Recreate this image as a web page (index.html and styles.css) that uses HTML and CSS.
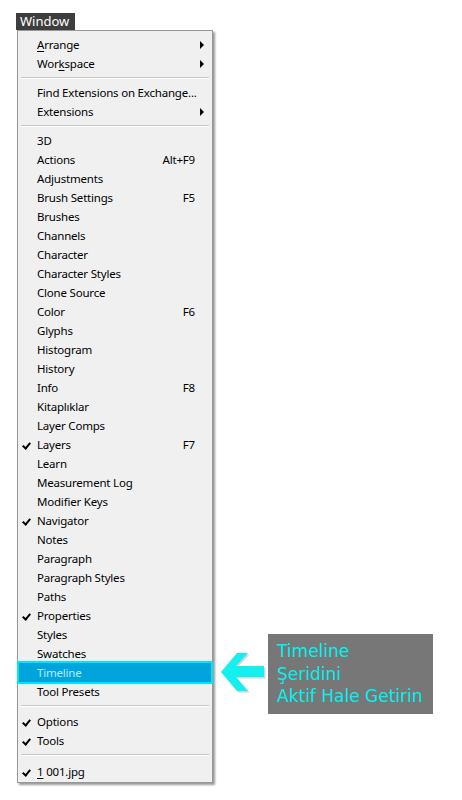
FILE: index.html
```html
<!DOCTYPE html>
<html lang="tr">
<head>
  <meta charset="UTF-8">
  <title>Window</title>
  <link rel="stylesheet" href="styles.css">
</head>
<body>
<div class="page">
  <div class="tab">Window</div>

  <ul class="menu">
    <li class="item sub"><span class="label"><u>A</u>rrange</span></li>
    <li class="item sub"><span class="label">Wor<u>k</u>space</span></li>
    <li class="sep"></li>
    <li class="item"><span class="label">Find Extensions on Exchange...</span></li>
    <li class="item sub"><span class="label">Extensions</span></li>
    <li class="sep"></li>
    <li class="item"><span class="label">3D</span></li>
    <li class="item"><span class="label">Actions</span><span class="key">Alt+F9</span></li>
    <li class="item"><span class="label">Adjustments</span></li>
    <li class="item"><span class="label">Brush Settings</span><span class="key">F5</span></li>
    <li class="item"><span class="label">Brushes</span></li>
    <li class="item"><span class="label">Channels</span></li>
    <li class="item"><span class="label">Character</span></li>
    <li class="item"><span class="label">Character Styles</span></li>
    <li class="item"><span class="label">Clone Source</span></li>
    <li class="item"><span class="label">Color</span><span class="key">F6</span></li>
    <li class="item"><span class="label">Glyphs</span></li>
    <li class="item"><span class="label">Histogram</span></li>
    <li class="item"><span class="label">History</span></li>
    <li class="item"><span class="label">Info</span><span class="key">F8</span></li>
    <li class="item"><span class="label">Kitaplıklar</span></li>
    <li class="item"><span class="label">Layer Comps</span></li>
    <li class="item checked"><span class="label">Layers</span><span class="key">F7</span></li>
    <li class="item"><span class="label">Learn</span></li>
    <li class="item"><span class="label">Measurement Log</span></li>
    <li class="item"><span class="label">Modifier Keys</span></li>
    <li class="item checked"><span class="label">Navigator</span></li>
    <li class="item"><span class="label">Notes</span></li>
    <li class="item"><span class="label">Paragraph</span></li>
    <li class="item"><span class="label">Paragraph Styles</span></li>
    <li class="item"><span class="label">Paths</span></li>
    <li class="item checked"><span class="label">Properties</span></li>
    <li class="item"><span class="label">Styles</span></li>
    <li class="item"><span class="label">Swatches</span></li>
    <li class="item active"><span class="label">Timeline</span></li>
    <li class="item"><span class="label">Tool Presets</span></li>
    <li class="sep sep-11"></li>
    <li class="item checked"><span class="label">Options</span></li>
    <li class="item checked"><span class="label">Tools</span></li>
    <li class="sep sep-12"></li>
    <li class="item checked"><span class="label"><u>1</u> 001.jpg</span></li>
  </ul>

  <!-- annotation pointing at Timeline -->
  <svg class="arrow" width="48" height="42" viewBox="0 0 48 42">
    <polygon class="arrow-shadow" points="3,21 19,2 30,2 18,15 46,15 46,26 18,26 30,40 19,40" transform="translate(1.5,1.5)"/>
    <polygon class="arrow-fill" points="3,21 19,2 30,2 18,15 46,15 46,26 18,26 30,40 19,40"/>
  </svg>
  <div class="note">
    Timeline<br>
    Şeridini<br>
    Aktif Hale Getirin
  </div>
</div>
</body>
</html>
```

FILE: styles.css
```css
body {
  margin: 0;
  background: #fff;
  font-family: "Noto Sans", "Open Sans", sans-serif;
  font-size: 11.5px;
  letter-spacing: -0.2px;
  color: #000;
}

.page {
  position: relative;
  padding: 13px 0 0 16px;
  height: 787px;
}

.tab {
  display: inline-block;
  background: #3e3e3e;
  color: #fff;
  font-size: 13px;
  letter-spacing: 0;
  line-height: 17px;
  padding: 0 4px 0 4px;
  width: 51px;
}

.menu {
  list-style-type: none;
  margin: 0 0 0 1px;
  padding: 4px 0 1px 0;
  width: 194px;
  background: #f0f0f0;
  border: 1px solid #979797;
  box-shadow: 2px 2px 2px #9a9a9a;
}

.item {
  position: relative;
  display: flex;
  justify-content: space-between;
  align-items: center;
  height: 19px;
  padding: 0 17px 0 19px;
  white-space: nowrap;
}

.item u {
  text-decoration: underline;
  text-underline-offset: 2px;
}

.key {
  text-align: right;
}

.sub::after {
  content: "";
  position: absolute;
  right: 8px;
  top: 6px;
  border-left: 4px solid #000;
  border-top: 4px solid transparent;
  border-bottom: 4px solid transparent;
}

.checked::before {
  content: "";
  position: absolute;
  left: 6px;
  top: 6px;
  width: 3px;
  height: 6px;
  border-right: 2px solid #000;
  border-bottom: 2px solid #000;
  transform: rotate(40deg);
}

.active {
  box-sizing: border-box;
  margin: -2px -1px;
  height: 23px;
  padding: 0 16px 0 18px;
  background: #00a4dc;
  border: 2px solid #00e6f6;
  color: #b8ecff;
}

.sep {
  height: 10px;
  position: relative;
}

.sep-11 {
  height: 11px;
}

.sep-12 {
  height: 12px;
}

.sep::after {
  content: "";
  position: absolute;
  left: 3px;
  right: 3px;
  top: 4px;
  border-top: 1px solid #c8c8c8;
  border-bottom: 1px solid #fff;
}

.arrow {
  position: absolute;
  left: 218px;
  top: 651px;
}

.arrow-fill {
  fill: #14f0ee;
}

.arrow-shadow {
  fill: #b8b8b8;
  opacity: 0.6;
}

.note {
  position: absolute;
  left: 268px;
  top: 634px;
  width: 165px;
  height: 80px;
  box-sizing: border-box;
  padding: 6px 0 0 9px;
  background: #777;
  color: #00f2f0;
  font-family: "DejaVu Sans", sans-serif;
  font-size: 17px;
  letter-spacing: 0;
  line-height: 22.5px;
  white-space: nowrap;
}
```
